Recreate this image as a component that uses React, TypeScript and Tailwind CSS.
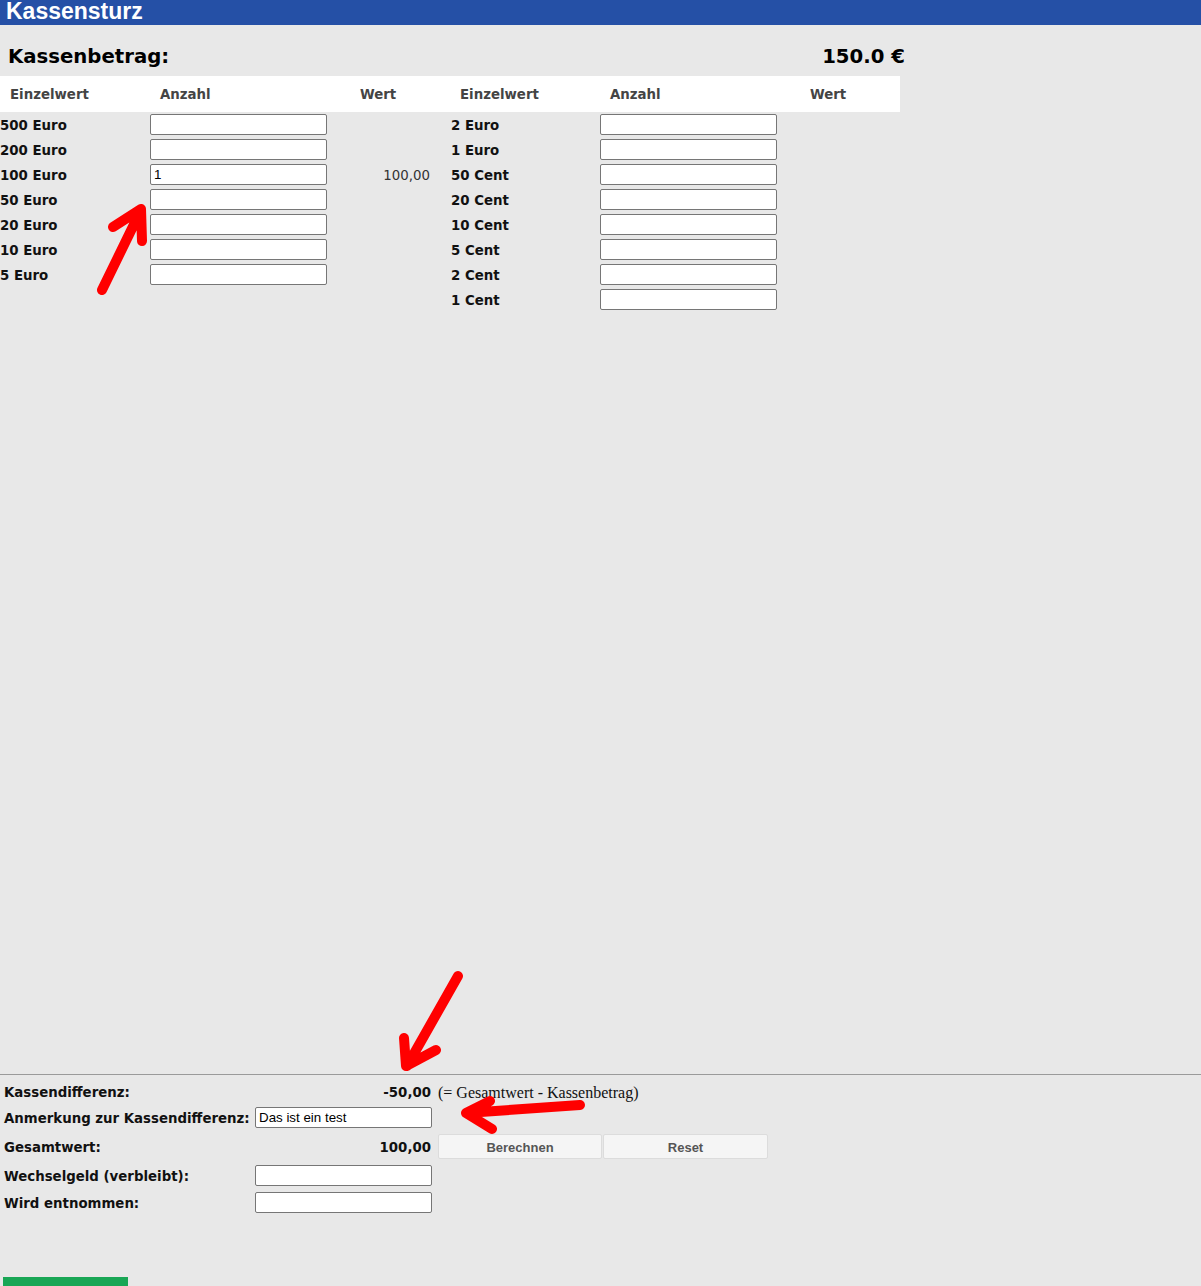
import React from "react";

const left = [
  { label: "500 Euro", value: "", total: "" },
  { label: "200 Euro", value: "", total: "" },
  { label: "100 Euro", value: "1", total: "100,00" },
  { label: "50 Euro", value: "", total: "" },
  { label: "20 Euro", value: "", total: "" },
  { label: "10 Euro", value: "", total: "" },
  { label: "5 Euro", value: "", total: "" },
];

const right = [
  { label: "2 Euro", value: "", total: "" },
  { label: "1 Euro", value: "", total: "" },
  { label: "50 Cent", value: "", total: "" },
  { label: "20 Cent", value: "", total: "" },
  { label: "10 Cent", value: "", total: "" },
  { label: "5 Cent", value: "", total: "" },
  { label: "2 Cent", value: "", total: "" },
  { label: "1 Cent", value: "", total: "" },
];

function Field({ value = "" }: { value?: string }) {
  return (
    <input
      type="text"
      defaultValue={value}
      className="block w-[177px] h-[21px] bg-white border border-[#767676] rounded-[2px] pl-[3px] pr-[2px] text-[13.33px] text-black font-['Liberation_Sans',Arial,sans-serif] outline-none"
    />
  );
}

function CoinColumn({ rows, first }: { rows: typeof left; first?: boolean }) {
  return (
    <div className="flex flex-col w-[450px]">
      {rows.map((r) => (
        <div key={r.label} className="grid grid-cols-[150px_200px_100px] h-[25px]">
          <div className={`${first ? "" : "pl-[1px]"} flex items-center pt-[2px] font-bold text-[13.33px] text-[#111]`}>
            {r.label}
          </div>
          <div className="flex items-center">
            <Field value={r.value} />
          </div>
          <div className="flex items-center justify-end pt-[2px] pr-[20px] text-[13.33px] text-[#333]">{r.total}</div>
        </div>
      ))}
    </div>
  );
}

function Arrows() {
  return (
    <svg
      className="absolute inset-0 w-full h-full pointer-events-none"
      viewBox="0 0 1201 1286"
      fill="none"
      stroke="#ff0000"
      strokeWidth={10}
      strokeLinecap="round"
      strokeLinejoin="round"
    >
      <path d="M102 290 L141 210 M113 227 L141 209 L142 241" />
      <path d="M458 976 L407 1066 M404 1038 L406 1066 L436 1050" />
      <path d="M580 1105 L466 1113 M490 1101 L466 1113 L492 1129" />
    </svg>
  );
}

export default function App() {
  return (
    <div className="relative min-h-[1286px] flex flex-col bg-[#e8e8e8] font-['DejaVu_Sans',Verdana,sans-serif] text-black">
      <div className="h-[25px] bg-[#2550a6] pl-[6px] overflow-hidden">
        <div className="leading-[22px] text-[23px] font-bold text-white font-['Liberation_Sans',Arial,sans-serif]">
          Kassensturz
        </div>
      </div>

      <div className="w-[905px] h-[51px] pt-[20px] pl-[8px] flex justify-between">
        <div className="text-[19.7px] leading-[24px] font-bold">Kassenbetrag:</div>
        <div className="text-[19.7px] leading-[24px] font-bold">150.0 €</div>
      </div>

      <div className="w-[900px]">
        <div className="grid grid-cols-[150px_200px_100px_150px_200px_100px] h-[36px] items-center pt-[2px] bg-white text-[13.33px] font-bold text-[#444]">
          <div className="pl-[10px]">Einzelwert</div>
          <div className="pl-[10px]">Anzahl</div>
          <div className="pl-[10px]">Wert</div>
          <div className="pl-[10px]">Einzelwert</div>
          <div className="pl-[10px]">Anzahl</div>
          <div className="pl-[10px]">Wert</div>
        </div>
        <div className="flex items-start">
          <CoinColumn rows={left} first />
          <CoinColumn rows={right} />
        </div>
      </div>

      <div className="flex-1" />

      <div className="border-t border-[#9a9a9a] pt-[5px]">
        <div className="grid grid-cols-[255px_177px_auto] text-[13.33px]">
          <div className="h-[24px] flex items-center pt-[2px] pl-[4px] font-bold text-[#111]">Kassendifferenz:</div>
          <div className="h-[24px] flex items-center pt-[2px] justify-end pr-[1px] font-bold text-[#111]">-50,00</div>
          <div className="h-[24px] flex items-center pt-[2px] pl-[6px] text-[16px] text-[#111] font-['Liberation_Serif','Times_New_Roman',serif]">
            (= Gesamtwert - Kassenbetrag)
          </div>

          <div className="h-[27px] flex items-center pt-[2px] pl-[4px] font-bold text-[#111]">Anmerkung zur Kassendifferenz:</div>
          <div className="h-[27px] flex items-center">
            <Field value="Das ist ein test" />
          </div>
          <div className="h-[27px]" />

          <div className="h-[31px] flex items-center pt-[2px] pl-[4px] font-bold text-[#111]">Gesamtwert:</div>
          <div className="h-[31px] flex items-center pt-[2px] justify-end pr-[1px] font-bold text-[#111]">100,00</div>
          <div className="h-[31px] flex items-center pl-[6px] gap-[1px]">
            <button className="w-[164px] h-[25px] pt-[3px] bg-[#f5f5f5] border border-[#dcdcdc] rounded-[2px] text-[13px] font-bold text-[#555] font-['Liberation_Sans',Arial,sans-serif]">
              Berechnen
            </button>
            <button className="w-[165px] h-[25px] pt-[3px] bg-[#f5f5f5] border border-[#dcdcdc] rounded-[2px] text-[13px] font-bold text-[#555] font-['Liberation_Sans',Arial,sans-serif]">
              Reset
            </button>
          </div>

          <div className="h-[27px] flex items-center pt-[2px] pl-[4px] font-bold text-[#111]">Wechselgeld (verbleibt):</div>
          <div className="h-[27px] flex items-center">
            <Field />
          </div>
          <div className="h-[27px]" />

          <div className="h-[27px] flex items-center pt-[2px] pl-[4px] font-bold text-[#111]">Wird entnommen:</div>
          <div className="h-[27px] flex items-center">
            <Field />
          </div>
          <div className="h-[27px]" />
        </div>

        <div className="mt-[61px] ml-[3px] w-[125px] h-[9px] bg-[#19a655]" />
      </div>

      <Arrows />
    </div>
  );
}
